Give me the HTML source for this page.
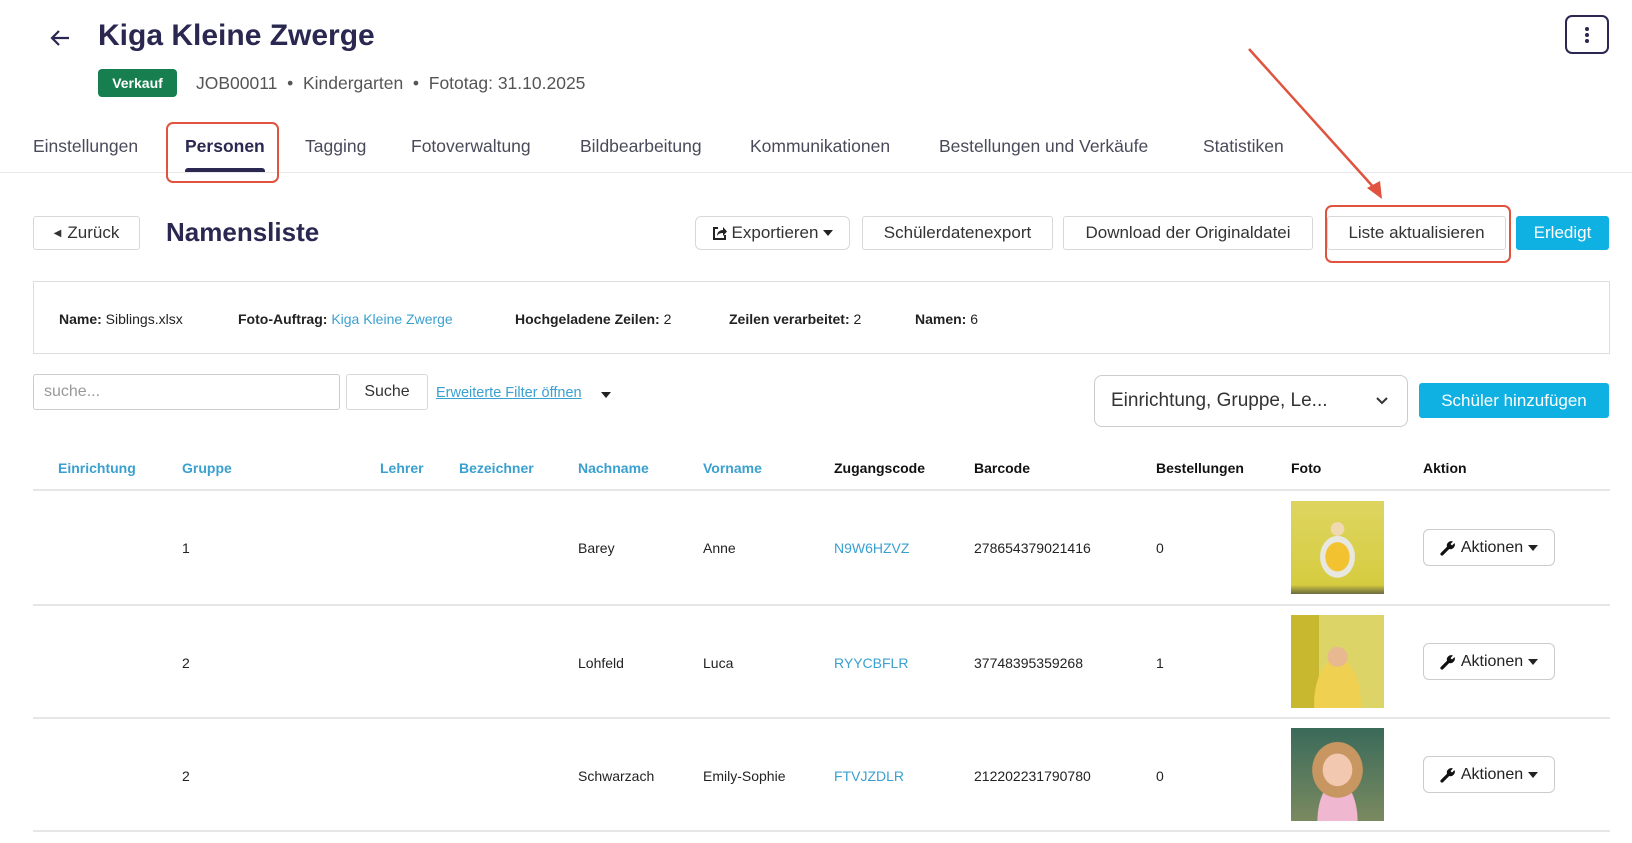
<!DOCTYPE html>
<html><head><meta charset="utf-8"><style>
*{box-sizing:border-box;margin:0;padding:0}
body{width:1632px;height:843px;overflow:hidden;background:#fff;font-family:"Liberation Sans",sans-serif;color:#222;position:relative}
.a{position:absolute;white-space:nowrap}
.btn{position:absolute;border:1px solid #d8d8d8;border-radius:3px;background:#fff;font-size:17px;color:#333;display:flex;align-items:center;justify-content:center}
.tab{position:absolute;top:136px;font-size:17.5px;color:#4a4a5a}
.th{position:absolute;top:460px;font-size:14px;font-weight:bold;color:#3aa0d0}
.thb{color:#111}
.hl{position:absolute;left:33px;width:1577px;height:2px;background:#e6e6e6}
.td{position:absolute;font-size:14px;color:#222}
.lnk{color:#3aa0d0}
.ph{position:absolute;left:1291px;width:93px;height:93px}
.act{position:absolute;left:1423px;width:132px;height:37px;border:1px solid #ccc;border-radius:6px;font-size:16px;display:flex;align-items:center;justify-content:center;gap:5px;color:#222}
.tri{display:inline-block;width:0;height:0;border-left:5px solid transparent;border-right:5px solid transparent;border-top:6px solid #222}
</style></head><body>
<svg class="a" style="left:48px;top:28px" width="24" height="20" viewBox="0 0 24 20"><path d="M21 10H4M11 3L4 10l7 7" stroke="#2a2850" stroke-width="2.2" fill="none"/></svg>
<div class="a" style="left:98px;top:19px;font-size:30px;font-weight:bold;color:#2a2850">Kiga Kleine Zwerge</div>
<div class="a" style="left:98px;top:69px;width:79px;height:28px;background:#177f4f;border-radius:4px;color:#fff;font-size:14px;font-weight:bold;display:flex;align-items:center;justify-content:center">Verkauf</div>
<div class="a" style="left:196px;top:73px;font-size:17.5px;color:#555">JOB00011 &nbsp;•&nbsp; Kindergarten &nbsp;•&nbsp; Fototag: 31.10.2025</div>
<div class="a" style="left:1565px;top:15px;width:44px;height:39px;border:2px solid #2a2850;border-radius:7px;display:flex;align-items:center;justify-content:center">
<svg width="6" height="18"><circle cx="3" cy="3" r="2" fill="#2a2850"/><circle cx="3" cy="9" r="2" fill="#2a2850"/><circle cx="3" cy="15" r="2" fill="#2a2850"/></svg></div>
<div class="tab" style="left:33px">Einstellungen</div>
<div class="tab" style="left:185px;font-weight:bold;color:#2a2850">Personen</div>
<div class="a" style="left:185px;top:168px;width:80px;height:5px;background:#2a2850;border-radius:3px 3px 0 0"></div>
<div class="tab" style="left:305px">Tagging</div>
<div class="tab" style="left:411px">Fotoverwaltung</div>
<div class="tab" style="left:580px">Bildbearbeitung</div>
<div class="tab" style="left:750px">Kommunikationen</div>
<div class="tab" style="left:939px">Bestellungen und Verkäufe</div>
<div class="tab" style="left:1203px">Statistiken</div>
<div class="a" style="left:0;top:172px;width:1632px;height:1px;background:#e8e8e8"></div>
<div class="a" style="left:166px;top:122px;width:113px;height:61px;border:2.5px solid #e0533e;border-radius:7px"></div>

<div class="btn" style="left:33px;top:216px;width:107px;height:34px;gap:6px"><span style="font-size:10px">◀</span>Zurück</div>
<div class="a" style="left:166px;top:217px;font-size:26px;font-weight:bold;color:#2a2850">Namensliste</div>
<div class="btn" style="left:695px;top:216px;width:155px;height:34px;border-radius:6px;gap:5px"><svg width="15" height="15" viewBox="0 0 15 15"><path d="M6 2H2v11h11V9" stroke="#222" stroke-width="2" fill="none"/><path d="M5 10c0-4 3-6 6-6V1l4 4.5L11 10V7c-3 0-5 1-6 3z" fill="#222"/></svg>Exportieren <span class="tri"></span></div>
<div class="btn" style="left:862px;top:216px;width:191px;height:34px">Schülerdatenexport</div>
<div class="btn" style="left:1063px;top:216px;width:250px;height:34px">Download der Originaldatei</div>
<div class="btn" style="left:1327px;top:216px;width:179px;height:34px">Liste aktualisieren</div>
<div class="btn" style="left:1516px;top:216px;width:93px;height:34px;background:#0fb0e2;border-color:#0fb0e2;color:#fff">Erledigt</div>
<div class="a" style="left:1325px;top:205px;width:186px;height:58px;border:2.5px solid #e0533e;border-radius:7px"></div>
<svg class="a" style="left:0;top:0" width="1632" height="843"><line x1="1249" y1="49" x2="1376" y2="190" stroke="#e0533e" stroke-width="2.5"/><polygon points="1382,199 1367,188 1380,181" fill="#e0533e"/></svg>

<div class="a" style="left:33px;top:281px;width:1577px;height:73px;border:1px solid #ddd"></div>
<div class="a" style="left:59px;top:311px;font-size:14px"><b>Name:</b> Siblings.xlsx</div>
<div class="a" style="left:238px;top:311px;font-size:14px"><b>Foto-Auftrag:</b> <span class="lnk">Kiga Kleine Zwerge</span></div>
<div class="a" style="left:515px;top:311px;font-size:14px"><b>Hochgeladene Zeilen:</b> 2</div>
<div class="a" style="left:729px;top:311px;font-size:14px"><b>Zeilen verarbeitet:</b> 2</div>
<div class="a" style="left:915px;top:311px;font-size:14px"><b>Namen:</b> 6</div>

<div class="a" style="left:33px;top:374px;width:307px;height:36px;border:1px solid #ccc;border-radius:3px;font-size:16px;color:#999;padding:8px 10px">suche...</div>
<div class="btn" style="left:346px;top:374px;width:82px;height:36px;font-size:16px">Suche</div>
<div class="a" style="left:436px;top:385px;font-size:14.5px;color:#3aa0d0;text-decoration:underline">Erweiterte Filter öffnen</div>
<span class="a tri" style="left:601px;top:392px"></span>
<div class="a" style="left:1094px;top:375px;width:314px;height:52px;border:1px solid #ccc;border-radius:8px;font-size:19px;color:#333;padding:14px 16px">Einrichtung, Gruppe, Le...</div>
<svg class="a" style="left:1375px;top:396px" width="14" height="10"><path d="M2 2l5 5 5-5" stroke="#333" stroke-width="2" fill="none"/></svg>
<div class="btn" style="left:1419px;top:383px;width:190px;height:35px;background:#0fb0e2;border-color:#0fb0e2;color:#fff;font-size:17px">Schüler hinzufügen</div>

<div class="th" style="left:58px">Einrichtung</div>
<div class="th" style="left:182px">Gruppe</div>
<div class="th" style="left:380px">Lehrer</div>
<div class="th" style="left:459px">Bezeichner</div>
<div class="th" style="left:578px">Nachname</div>
<div class="th" style="left:703px">Vorname</div>
<div class="th thb" style="left:834px">Zugangscode</div>
<div class="th thb" style="left:974px">Barcode</div>
<div class="th thb" style="left:1156px">Bestellungen</div>
<div class="th thb" style="left:1291px">Foto</div>
<div class="th thb" style="left:1423px">Aktion</div>
<div class="hl" style="top:489px"></div>
<div class="hl" style="top:604px"></div>
<div class="hl" style="top:717px"></div>
<div class="hl" style="top:830px"></div>

<div class="td" style="top:540px;left:182px">1</div><div class="td" style="top:540px;left:578px">Barey</div><div class="td" style="top:540px;left:703px">Anne</div><div class="td lnk" style="top:540px;left:834px">N9W6HZVZ</div><div class="td" style="top:540px;left:974px">278654379021416</div><div class="td" style="top:540px;left:1156px">0</div>
<div class="ph" style="top:501px;background:radial-gradient(circle at 50% 30%,#f0d9b0 0 8%,transparent 9%),radial-gradient(ellipse at 50% 60%,#f2c230 0 18%,#e8e8e0 19% 26%,transparent 27%),linear-gradient(#ddd560,#d6cc40 90%,#6a6a40)"></div>
<div class="act" style="top:529px"><svg width="16" height="16" viewBox="0 0 16 16"><path d="M2 14L8 8" stroke="#111" stroke-width="3.2" stroke-linecap="round"/><path d="M7 7a4.5 4.5 0 0 1 6-5.5L10.5 4l1.5 1.5 2.5-2.5A4.5 4.5 0 0 1 9 9z" fill="#111"/></svg>Aktionen <span class="tri"></span></div>

<div class="td" style="top:655px;left:182px">2</div><div class="td" style="top:655px;left:578px">Lohfeld</div><div class="td" style="top:655px;left:703px">Luca</div><div class="td lnk" style="top:655px;left:834px">RYYCBFLR</div><div class="td" style="top:655px;left:974px">37748395359268</div><div class="td" style="top:655px;left:1156px">1</div>
<div class="ph" style="top:615px;background:radial-gradient(circle at 50% 45%,#e8b890 0 14%,transparent 15%),radial-gradient(ellipse at 50% 95%,#f0d050 0 35%,transparent 36%),linear-gradient(90deg,#c8b830 0 30%,#ddd468 30%)"></div>
<div class="act" style="top:643px"><svg width="16" height="16" viewBox="0 0 16 16"><path d="M2 14L8 8" stroke="#111" stroke-width="3.2" stroke-linecap="round"/><path d="M7 7a4.5 4.5 0 0 1 6-5.5L10.5 4l1.5 1.5 2.5-2.5A4.5 4.5 0 0 1 9 9z" fill="#111"/></svg>Aktionen <span class="tri"></span></div>

<div class="td" style="top:768px;left:182px">2</div><div class="td" style="top:768px;left:578px">Schwarzach</div><div class="td" style="top:768px;left:703px">Emily-Sophie</div><div class="td lnk" style="top:768px;left:834px">FTVJZDLR</div><div class="td" style="top:768px;left:974px">212202231790780</div><div class="td" style="top:768px;left:1156px">0</div>
<div class="ph" style="top:728px;background:radial-gradient(ellipse at 50% 45%,#f2c8b0 0 22%,#c89660 23% 38%,transparent 39%),radial-gradient(ellipse at 50% 100%,#f0b8d0 0 30%,transparent 31%),linear-gradient(#3a6a5a,#7a8a60)"></div>
<div class="act" style="top:756px"><svg width="16" height="16" viewBox="0 0 16 16"><path d="M2 14L8 8" stroke="#111" stroke-width="3.2" stroke-linecap="round"/><path d="M7 7a4.5 4.5 0 0 1 6-5.5L10.5 4l1.5 1.5 2.5-2.5A4.5 4.5 0 0 1 9 9z" fill="#111"/></svg>Aktionen <span class="tri"></span></div>
</body></html>
